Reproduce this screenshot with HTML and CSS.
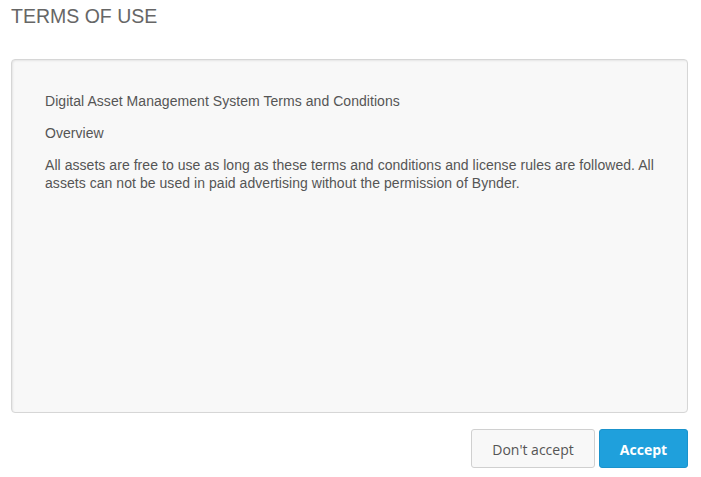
FILE: index.html
```html
<!DOCTYPE html>
<html>
<head>
<meta charset="utf-8">
<link rel="stylesheet" href="styles.css">
</head>
<body>
<div class="page">
  <h1 class="title">TERMS OF USE</h1>
  <div class="terms">
    <p>Digital Asset Management System Terms and Conditions</p>
    <p>Overview</p>
    <p>All assets are free to use as long as these terms and conditions and license rules are followed. All assets can not be used in paid advertising without the permission of Bynder.</p>
  </div>
  <div class="actions">
    <button class="btn btn-default">Don't accept</button>
    <button class="btn btn-primary">Accept</button>
  </div>
</div>
</body>
</html>
```

FILE: styles.css
```css
html, body {
  margin: 0;
  padding: 0;
  background: #ffffff;
}
.page {
  padding: 0 13px 0 11px;
  font-family: "Liberation Sans", Arial, sans-serif;
}
.title {
  margin: 0;
  padding-top: 5px;
  height: 54px;
  font-size: 19.5px;
  font-weight: normal;
  line-height: 22px;
  color: #666666;
}
.terms {
  box-sizing: border-box;
  height: 354px;
  background: #f8f8f8;
  border: 1px solid #d6d6d6;
  border-radius: 4px;
  box-shadow: inset 1px 1px 2px rgba(0,0,0,0.08);
  padding: 32px 18px 20px 33px;
  color: #555555;
  font-size: 14px;
  line-height: 18px;
  letter-spacing: 0.05px;
}
.terms p {
  margin: 0 0 14px 0;
}
.actions {
  display: flex;
  justify-content: flex-end;
  gap: 4px;
  margin-top: 16px;
}
.btn {
  font-family: "Open Sans", sans-serif;
  font-size: 14px;
  height: 39px;
  padding: 2px 0 0 0;
  border-radius: 3px;
  cursor: pointer;
}
.btn-default {
  width: 124px;
  background: #f8f8f8;
  border: 1px solid #d0d0d0;
  color: #555555;
}
.btn-primary {
  width: 89px;
  background: #1fa0dc;
  border: 1px solid #1a93cc;
  color: #ffffff;
  font-weight: bold;
}
```
